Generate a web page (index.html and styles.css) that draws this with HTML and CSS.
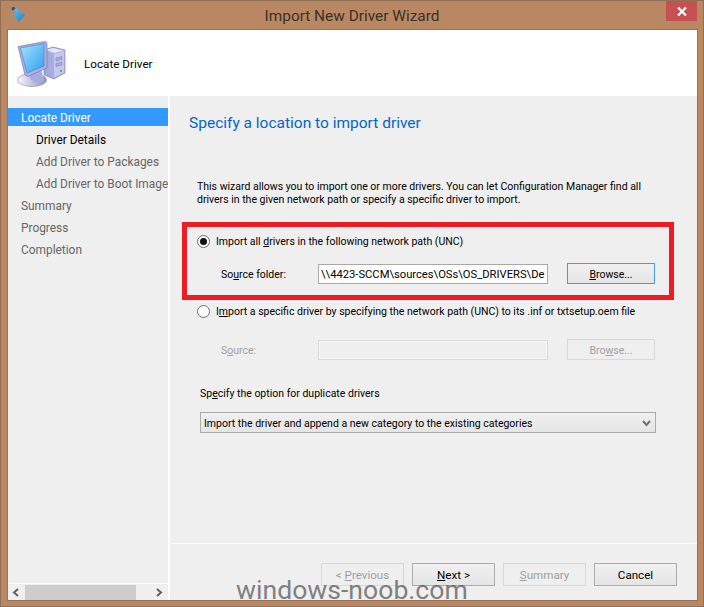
FILE: index.html
```html
<!DOCTYPE html>
<html lang="en">
<head>
<meta charset="utf-8">
<title>Import New Driver Wizard</title>
<link rel="stylesheet" href="styles.css">
</head>
<body>
<div class="window">
  <div class="titlebar">
    <svg class="app-icon" width="16" height="18" viewBox="0 0 16 18">
      <defs><linearGradient id="arrow" x1="0" y1="0" x2="1" y2="1"><stop offset="0" stop-color="#6fc4ee"/><stop offset="1" stop-color="#1a7ccc"/></linearGradient></defs>
      <path d="M1 2 C5 1 9.5 3 10.5 8 L14.5 8 L8 16 L1.5 8 L6 8 C5.5 6 4 4.5 1.5 4.5 Z" fill="url(#arrow)"/>
      <path d="M.5 1.5 L3.5 1 L4.5 2.5 L2 4.5 L1 4 Z" fill="#2a4d6c"/>
    </svg>
    <div class="title">Import New Driver Wizard</div>
    <div class="close">
      <svg width="10" height="9" viewBox="0 0 10 9"><path d="M1 .5 L9 8.5 M9 .5 L1 8.5" stroke="#fff" stroke-width="2.2" fill="none"/></svg>
    </div>
  </div>
  <div class="client">
    <div class="header">
      <svg class="computer" width="50" height="48" viewBox="0 0 50 48">
        <defs>
          <linearGradient id="screen" x1="0" y1="0" x2="1" y2="1"><stop offset="0" stop-color="#a6e6fb"/><stop offset="1" stop-color="#2f9cf2"/></linearGradient>
          <linearGradient id="tower" x1="0" y1="0" x2="1" y2="0"><stop offset="0" stop-color="#9ea3dc"/><stop offset="1" stop-color="#b9bdea"/></linearGradient>
          <linearGradient id="base" x1="0" y1="0" x2="1" y2="0"><stop offset="0" stop-color="#f6f7fc"/><stop offset="1" stop-color="#8e92c4"/></linearGradient>
        </defs>
        <path d="M27 11 L36 8 L48 11 L48 34 L37 40 L27 36 Z" fill="url(#tower)" stroke="#7176ad" stroke-width=".6"/>
        <path d="M29 11 L36 9 L46 11.5 L37 14 Z" fill="#e4e6fa"/>
        <path d="M37 15 L47 12.5 L47 33 L37 38.5 Z" fill="#c4c8ec"/>
        <path d="M39 19 L45 17.5 L45 20.5 L39 22 Z M39 24.5 L45 23 L45 26 L39 27.5 Z" fill="#a7abd8" stroke="#7d82b8" stroke-width=".5"/>
        <rect x="43" y="31" width="2" height="2" fill="#4cc44c"/>
        <ellipse cx="15" cy="41" rx="14.5" ry="6.5" fill="url(#base)" stroke="#8286b8" stroke-width=".6"/>
        <path d="M11 34 L24 30 L27 41 Q21 46 14 41 Z" fill="#a8acdc"/>
        <path d="M1 7.5 L28 2.5 L30 4 L30 29 L11 37.5 L8 36 Z" fill="#aab0e4" stroke="#6d72a8" stroke-width=".6"/>
        <path d="M3.5 9 L27 4.5 L27 27 L10 34 Z" fill="url(#screen)" stroke="#4d6fa8" stroke-width=".5"/>
      </svg>
      <div class="header-label">Locate Driver</div>
    </div>
    <div class="body">
      <nav class="sidebar">
        <div class="steps">
          <div class="step selected">Locate Driver</div>
          <div class="step sub current">Driver Details</div>
          <div class="step sub">Add Driver to Packages</div>
          <div class="step sub">Add Driver to Boot Image</div>
          <div class="step">Summary</div>
          <div class="step">Progress</div>
          <div class="step">Completion</div>
        </div>
        <div class="scrollbar">
          <svg class="arrow" width="8" height="9" viewBox="0 0 8 9"><path d="M6 1 L2 4.5 L6 8" stroke="#606060" stroke-width="2" fill="none"/></svg>
          <div class="track"><div class="thumb"></div></div>
          <svg class="arrow" width="8" height="9" viewBox="0 0 8 9"><path d="M2 1 L6 4.5 L2 8" stroke="#606060" stroke-width="2" fill="none"/></svg>
        </div>
      </nav>
      <main class="main">
        <div class="content">
          <h1 class="heading">Specify a location to import driver</h1>
          <p class="intro">This wizard allows you to import one or more drivers. You can let Configuration Manager find all<br>drivers in the given network path or specify a specific driver to import.</p>
          <div class="radio-row first-radio"><span class="radio checked"></span><span>Import all <u>d</u>rivers in the following network path (UNC)</span></div>
          <div class="field-row source-one">
            <label class="field-label">So<u>u</u>rce folder:</label>
            <input class="text-input" type="text" readonly value="\\4423-SCCM\sources\OSs\OS_DRIVERS\Dell\Win7x64">
            <button class="btn browse focused"><span><u>B</u>rowse...</span></button>
          </div>
          <div class="radio-row second-radio"><span class="radio"></span><span>I<u>m</u>port a specific driver by specifying the network path (UNC) to its .inf or txtsetup.oem file</span></div>
          <div class="field-row source-two disabled">
            <label class="field-label">S<u>o</u>urce:</label>
            <input class="text-input" type="text" disabled>
            <button class="btn browse" disabled><span>Bro<u>w</u>se...</span></button>
          </div>
          <div class="dup-label">Sp<u>e</u>cify the option for duplicate drivers</div>
          <div class="select">
            <span>Import the driver and append a new category to the existing categories</span>
            <svg width="9" height="7" viewBox="0 0 9 7"><path d="M1 1 L4.5 5 L8 1" stroke="#707070" stroke-width="2" fill="none"/></svg>
          </div>
        </div>
        <div class="footer">
          <button class="btn" disabled><span>&lt; <u>P</u>revious</span></button>
          <button class="btn"><span><u>N</u>ext &gt;</span></button>
          <button class="btn" disabled><span><u>S</u>ummary</span></button>
          <button class="btn"><span>Cancel</span></button>
        </div>
      </main>
    </div>
  </div>
  <div class="annotation"></div>
  <div class="watermark">windows-noob.com</div>
</div>
</body>
</html>
```
FILE: styles.css
```css
* { box-sizing: border-box; }
html, body { margin: 0; padding: 0; }
body { width: 704px; height: 607px; overflow: hidden; font-family: Roboto, "Open Sans", sans-serif; font-size: 10.5px; color: #000; }
.window { position: relative; width: 704px; height: 607px; background: #b98863; border: 1px solid #8f6f56; display: flex; flex-direction: column; overflow: hidden; }
.titlebar { height: 29px; flex: none; display: flex; align-items: flex-start; position: relative; }
.app-icon { margin: 5px 0 0 10px; flex: none; }
.title { position: absolute; left: 0; right: 0; top: 5px; text-align: center; font-size: 15.4px; line-height: 20px; color: #3b3026; }
.close { position: absolute; top: 0; right: 6px; width: 31px; height: 20px; background: #c75050; display: flex; align-items: center; justify-content: center; }
.client { margin: 0 6px 6px 7px; flex: 1; display: flex; flex-direction: column; min-height: 0; outline: 1px solid #96735a; }
.header { height: 66px; flex: none; background: #fff; display: flex; align-items: center; padding-left: 9px; }
.computer { flex: none; }
.header-label { margin-left: 17px; font-size: 11.7px; margin-top: 1px; }
.body { flex: 1; display: flex; min-height: 0; background: #fff; }
.sidebar { width: 160px; flex: none; background: #efefef; display: flex; flex-direction: column; margin-right: 2px; }
.steps { flex: 1; padding-top: 12px; display: flex; flex-direction: column; gap: 4px; overflow: hidden; }
.step { height: 18px; line-height: 20px; padding-left: 13px; font-size: 11.9px; color: #666; white-space: nowrap; }
.step.sub { padding-left: 28px; }
.step.current { color: #000; }
.step.selected { background: #3399ff; color: #fff; }
.scrollbar { height: 17px; flex: none; border-top: 1px solid #fff; display: flex; align-items: center; background: #efefef; }
.arrow { flex: none; margin: 0 5px 0 4px; }
.track { flex: 1; height: 15px; display: flex; }
.thumb { width: 111px; height: 15px; background: #cdcdcd; }
.main { flex: 1; min-width: 0; background: #efefef; display: flex; flex-direction: column; }
.content { flex: 1; min-height: 0; padding: 16px 0 0 19px; border-bottom: 1px solid #fff; }
.heading { margin: 0; font-size: 15.5px; line-height: 22px; font-weight: 400; color: #0066cc; }
.intro { margin: 46px 0 0 8px; font-size: 10.5px; line-height: 13px; white-space: nowrap; }
.radio-row { display: flex; align-items: center; gap: 6px; height: 16px; margin-left: 8px; font-size: 10.5px; white-space: nowrap; }
.first-radio { margin-top: 27px; }
.second-radio { margin-top: 19px; }
.radio { width: 13px; height: 13px; flex: none; border: 1px solid #6f6f6f; border-radius: 50%; background: #fff; display: flex; align-items: center; justify-content: center; }
.radio.checked::after { content: ""; width: 7px; height: 7px; border-radius: 50%; background: #111; }
.field-row { display: flex; align-items: center; height: 21px; margin-left: 32px; font-size: 10.5px; }
.source-one { margin-top: 14px; }
.source-two { margin-top: 20px; }
.field-label { width: 97px; flex: none; white-space: nowrap; padding-top: 1px; }
.text-input { width: 230px; height: 20px; flex: none; border: 1px solid #a8a8a8; background: #fff; padding: 1px 2px 0; font: inherit; font-size: 11.2px; color: #000; outline: none; }
.btn { width: 83px; height: 23px; flex: none; padding: 1px 0 0; border: 1px solid #acacac; background: linear-gradient(#f0f0f0, #e5e5e5); font-family: inherit; font-size: 11.6px; color: #000; }
.btn:disabled { border-color: #d9d9d9; background: #efefef; color: #a0a0a0; }
.browse { width: 88px; height: 21px; margin-left: 19px; font-size: 10.5px; }
.focused { border-color: #3f9ef0; }
.disabled .field-label { color: #a0a0a0; }
.disabled .text-input { background: #efefef; border-color: #d9d9d9; box-shadow: inset 0 0 0 1px #f6f6f6; }
.dup-label { margin: 25px 0 0 11px; height: 16px; line-height: 18px; font-size: 10.5px; white-space: nowrap; }
.select { margin: 11px 0 0 11px; width: 456px; height: 21px; border: 1px solid #acacac; background: linear-gradient(#f0f0f0, #e5e5e5); display: flex; align-items: center; justify-content: space-between; padding: 1px 4px 0 3px; font-size: 10.5px; }
.footer { height: 56px; flex: none; display: flex; justify-content: flex-end; align-items: flex-start; gap: 8px; padding: 19px 20px 0 0; }
.annotation { position: absolute; left: 181px; top: 221px; width: 492px; height: 78px; border: 5px solid #ed1c24; pointer-events: none; }
.watermark { position: absolute; left: 235px; top: 570px; font-size: 26.6px; line-height: 38px; color: rgba(70, 70, 70, .68); white-space: nowrap; }
```
